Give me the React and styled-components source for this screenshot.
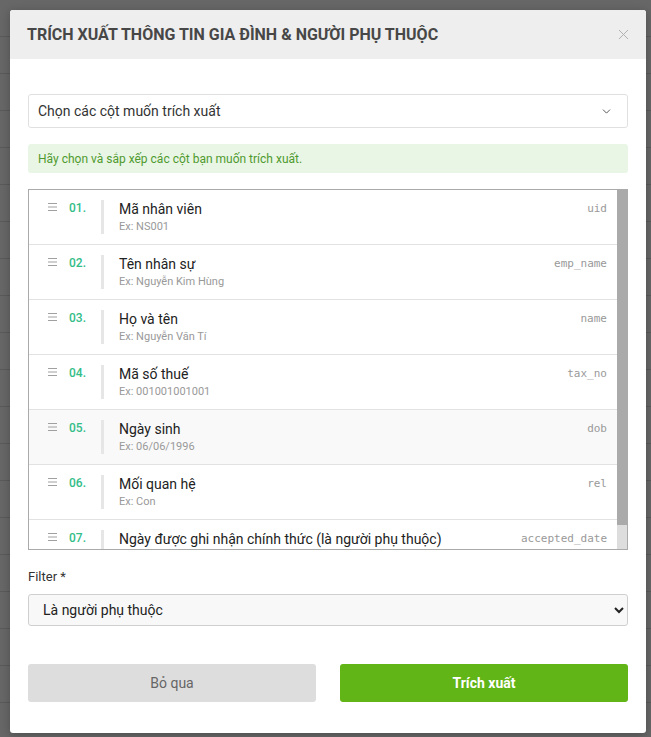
import React from 'react';
import styled, { createGlobalStyle } from 'styled-components';
import { ChevronDown, X } from 'lucide-react';

const GlobalStyle = createGlobalStyle`
  html, body {
    margin: 0;
    padding: 0;
    background: #676767;
    font-family: Roboto, "Noto Sans", "Liberation Sans", sans-serif;
  }
  * { box-sizing: border-box; }
`;

const columns = [
  { no: '01.', label: 'Mã nhân viên', example: 'Ex: NS001', code: 'uid' },
  { no: '02.', label: 'Tên nhân sự', example: 'Ex: Nguyễn Kim Hùng', code: 'emp_name' },
  { no: '03.', label: 'Họ và tên', example: 'Ex: Nguyễn Văn Tí', code: 'name' },
  { no: '04.', label: 'Mã số thuế', example: 'Ex: 001001001001', code: 'tax_no' },
  { no: '05.', label: 'Ngày sinh', example: 'Ex: 06/06/1996', code: 'dob', hover: true },
  { no: '06.', label: 'Mối quan hệ', example: 'Ex: Con', code: 'rel' },
  { no: '07.', label: 'Ngày được ghi nhận chính thức (là người phụ thuộc)', example: 'Ex: 01/01/2020', code: 'accepted_date' },
];

// icon kéo thả: 3 gạch ngang
const DragIcon = () => (
  <svg width="9" height="8" viewBox="0 0 9 8">
    <path d="M0 0.5H9M0 4H9M0 7.5H9" stroke="#a0a0a0" strokeWidth="1" />
  </svg>
);

function App() {
  return (
    <>
      <GlobalStyle />
      <Backdrop>
        <Modal>
          <Header>
            <Title>Trích xuất thông tin gia đình &amp; người phụ thuộc</Title>
            <CloseBtn>
              <X size={17} strokeWidth={1.4} />
            </CloseBtn>
          </Header>

          <Body>
            <Dropdown>
              <span>Chọn các cột muốn trích xuất</span>
              <ChevronDown size={13} strokeWidth={1.8} color="#555" />
            </Dropdown>

            <Alert>Hãy chọn và sắp xếp các cột bạn muốn trích xuất.</Alert>

            {/* danh sách cột có thể kéo thả */}
            <ListFrame>
              <ColumnList>
                {columns.map((col) => (
                  <ColumnRow key={col.no} $hover={col.hover}>
                    <DragHandle>
                      <DragIcon />
                    </DragHandle>
                    <RowNo>{col.no}</RowNo>
                    <RowInfo>
                      <RowLabel>{col.label}</RowLabel>
                      <RowExample>{col.example}</RowExample>
                    </RowInfo>
                    <RowCode>{col.code}</RowCode>
                  </ColumnRow>
                ))}
              </ColumnList>
              <ScrollTrack>
                <ScrollThumb />
              </ScrollTrack>
            </ListFrame>

            <FilterLabel>Filter *</FilterLabel>
            <FilterSelect defaultValue="dep">
              <option value="dep">Là người phụ thuộc</option>
              <option value="all">Tất cả</option>
            </FilterSelect>

            <Actions>
              <Button>Bỏ qua</Button>
              <Button $primary>Trích xuất</Button>
            </Actions>
          </Body>
        </Modal>
      </Backdrop>
    </>
  );
}

export default App;

const Backdrop = styled.div`
  min-height: 737px;
  padding: 10px 5px 4px 10px;
  background-color: #676767;
  background-image: repeating-linear-gradient(
    to bottom,
    transparent 0,
    transparent 36px,
    #5a5a5a 36px,
    #5a5a5a 37px
  );
`;

const Modal = styled.div`
  width: 636px;
  background: #fff;
  border-radius: 3px;
  overflow: hidden;
  box-shadow: 0 2px 10px rgba(0, 0, 0, 0.25);
`;

const Header = styled.div`
  height: 49px;
  background: #eeeeee;
  display: flex;
  align-items: center;
  justify-content: space-between;
  padding: 0 14px 0 17px;
`;

const Title = styled.h1`
  margin: 0;
  font-size: 16px;
  font-weight: 700;
  text-transform: uppercase;
  color: #474747;
`;

const CloseBtn = styled.span`
  display: flex;
  color: #b0b0b0;
`;

const Body = styled.div`
  display: flex;
  flex-direction: column;
  padding: 35px 18px 31px;
`;

const Dropdown = styled.div`
  height: 34px;
  border: 1px solid #e0e0e0;
  border-radius: 3px;
  display: flex;
  align-items: center;
  justify-content: space-between;
  padding: 0 14px 0 9px;
  font-size: 14px;
  color: #333;
`;

const Alert = styled.div`
  margin-top: 16px;
  height: 29px;
  display: flex;
  align-items: center;
  padding: 0 10px;
  background: #e9f6e5;
  border-radius: 3px;
  color: #4f9a2f;
  font-size: 12px;
`;

const ListFrame = styled.div`
  margin-top: 16px;
  height: 361px;
  border: 1px solid #aaa;
  display: flex;
`;

const ColumnList = styled.div`
  flex: 1;
  min-width: 0;
  overflow: hidden;
`;

const ScrollTrack = styled.div`
  width: 10px;
  background: #dddddd;
`;

const ScrollThumb = styled.div`
  height: 335px;
  background: #aaaaaa;
`;

const ColumnRow = styled.div`
  height: 55px;
  display: flex;
  align-items: flex-start;
  padding: 10px 10px 10px 19px;
  border-bottom: 1px solid #e2e2e2;
  background: ${(p) => (p.$hover ? '#f9f9f9' : '#fff')};

  &:last-child {
    border-bottom: none;
  }
`;

const DragHandle = styled.span`
  width: 21px;
  height: 16px;
  display: flex;
  align-items: center;
  padding-bottom: 2px;
`;

const RowNo = styled.span`
  width: 32px;
  font-size: 12px;
  font-weight: 500;
  line-height: 17px;
  color: #33bd88;
`;

const RowInfo = styled.div`
  flex: 1;
  min-width: 0;
  height: 34px;
  border-left: 3px solid #e6e6e6;
  padding-left: 15px;
  display: flex;
  flex-direction: column;
`;

const RowLabel = styled.span`
  font-size: 14px;
  line-height: 18px;
  color: #222;
  white-space: nowrap;
`;

const RowExample = styled.span`
  margin-top: 1px;
  font-size: 11px;
  line-height: 15px;
  color: #999;
`;

const RowCode = styled.span`
  font-family: "DejaVu Sans Mono", "Liberation Mono", monospace;
  font-size: 11px;
  line-height: 17px;
  color: #999;
`;

const FilterLabel = styled.label`
  margin-top: 19px;
  font-size: 13px;
  line-height: 16px;
  color: #333;
`;

const FilterSelect = styled.select`
  margin-top: 9px;
  height: 32px;
  padding: 0 10px;
  font-family: Roboto, "Noto Sans", sans-serif;
  font-size: 14px;
  color: #222;
  background: #f8f8f8;
  border: 1px solid #cfcfcf;
  border-radius: 3px;
`;

const Actions = styled.div`
  margin-top: 38px;
  display: grid;
  grid-template-columns: 1fr 1fr;
  gap: 24px;
`;

const Button = styled.button`
  height: 38px;
  border: none;
  border-radius: 3px;
  font-family: Roboto, "Noto Sans", sans-serif;
  font-size: 14px;
  font-weight: ${(p) => (p.$primary ? 700 : 400)};
  color: ${(p) => (p.$primary ? '#fff' : '#666')};
  background: ${(p) => (p.$primary ? '#62b516' : '#dddddd')};
`;
